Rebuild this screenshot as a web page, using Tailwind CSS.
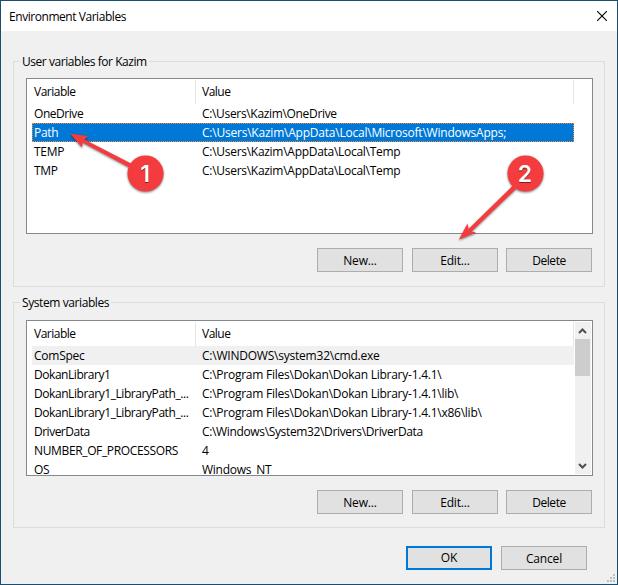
<!DOCTYPE html>
<html lang="en">
<head>
<meta charset="utf-8">
<title>Environment Variables</title>
<script src="https://cdn.jsdelivr.net/npm/@tailwindcss/browser@4"></script>
</head>
<body class="font-['Open_Sans','Noto_Sans',sans-serif] text-[12px] leading-[19px] text-black">
<div class="relative flex h-[585px] w-[618px] flex-col overflow-hidden whitespace-nowrap border border-[#1a4d6e] bg-[#f0f0f0]">
  <header class="flex h-[30px] shrink-0 items-center justify-between bg-white pl-2 pr-[10px]">
    <h1 class="tracking-[-0.45px]">Environment Variables</h1>
    <svg class="h-[10px] w-[10px]" viewBox="0 0 10 10" fill="none" stroke="#000" stroke-width="1.1"><path d="M0 0 10 10M10 0 0 10"/></svg>
  </header>

  <section class="relative ml-3 mt-[30px] h-[226px] w-[592px] shrink-0 border border-[#dcdcdc] px-3 pt-4">
    <h2 class="absolute -top-[10px] left-[6px] bg-[#f0f0f0] px-[2px] tracking-[-0.45px]">User variables for Kazim</h2>
    <div class="h-[156px] w-[567px] border border-[#828790] bg-white p-px pl-[5px] tracking-[-0.28px]">
      <div class="flex h-6 tracking-[-0.5px]">
        <div class="w-[164px] border-r border-[#e5e5e5] pl-[2px] pt-[2px]">Variable</div>
        <div class="w-[378px] border-r border-[#e5e5e5] pl-[6px] pt-[2px]">Value</div>
      </div>
      <div class="flex h-[19px]"><div class="w-[164px] pl-[2px] tracking-[-0.45px]">OneDrive</div><div class="pl-[6px] tracking-[-0.33px]">C:\Users\Kazim\OneDrive</div></div>
      <div class="flex h-[19px] w-[542px] bg-[#0078d7] text-white outline-1 -outline-offset-1 outline-dotted outline-[#ff8728]"><div class="w-[164px] pl-[2px]">Path</div><div class="pl-[6px] tracking-[-0.22px]">C:\Users\Kazim\AppData\Local\Microsoft\WindowsApps;</div></div>
      <div class="flex h-[19px]"><div class="w-[164px] pl-[2px]">TEMP</div><div class="pl-[6px]">C:\Users\Kazim\AppData\Local\Temp</div></div>
      <div class="flex h-[19px]"><div class="w-[164px] pl-[2px]">TMP</div><div class="pl-[6px]">C:\Users\Kazim\AppData\Local\Temp</div></div>
    </div>
    <div class="mt-[14px] flex pl-[291px] tracking-[-0.16px]">
      <button class="h-6 w-[86px] border border-[#adadad] bg-[#e1e1e1]">New...</button>
      <button class="ml-[9px] h-6 w-[86px] border border-[#adadad] bg-[#e1e1e1]">Edit...</button>
      <button class="ml-2 h-6 w-[86px] border border-[#adadad] bg-[#e1e1e1] tracking-[-0.45px]">Delete</button>
    </div>
  </section>

  <section class="relative ml-3 mt-[15px] h-[226px] w-[592px] shrink-0 border border-[#dcdcdc] px-3 pt-[17px]">
    <h2 class="absolute -top-[10px] left-[6px] bg-[#f0f0f0] px-[2px] tracking-[-0.41px]">System variables</h2>
    <div class="flex h-[156px] w-[567px] overflow-hidden border border-[#828790] bg-white p-px pl-[5px] tracking-[-0.25px]">
      <div class="h-[153px] w-[543px] overflow-hidden">
        <div class="flex h-6 tracking-[-0.5px]">
          <div class="w-[164px] border-r border-[#e5e5e5] pl-[2px] pt-[2px]">Variable</div>
          <div class="w-[378px] border-r border-[#e5e5e5] pl-[6px] pt-[2px]">Value</div>
        </div>
        <div class="flex h-[19px] w-[542px] bg-[#f0f0f0]"><div class="w-[164px] pl-[2px]">ComSpec</div><div class="pl-[6px] tracking-[-0.22px]">C:\WINDOWS\system32\cmd.exe</div></div>
        <div class="flex h-[19px]"><div class="w-[164px] pl-[2px] tracking-[-0.45px]">DokanLibrary1</div><div class="pl-[6px]">C:\Program Files\Dokan\Dokan Library-1.4.1\</div></div>
        <div class="flex h-[19px]"><div class="w-[164px] pl-[2px] tracking-[-0.43px]">DokanLibrary1_LibraryPath_...</div><div class="pl-[6px]">C:\Program Files\Dokan\Dokan Library-1.4.1\lib\</div></div>
        <div class="flex h-[19px]"><div class="w-[164px] pl-[2px] tracking-[-0.43px]">DokanLibrary1_LibraryPath_...</div><div class="pl-[6px]">C:\Program Files\Dokan\Dokan Library-1.4.1\x86\lib\</div></div>
        <div class="flex h-[19px]"><div class="w-[164px] pl-[2px] tracking-[-0.5px]">DriverData</div><div class="pl-[6px] tracking-[-0.35px]">C:\Windows\System32\Drivers\DriverData</div></div>
        <div class="flex h-[19px]"><div class="w-[164px] pl-[2px] tracking-[-0.36px]">NUMBER_OF_PROCESSORS</div><div class="pl-[6px]">4</div></div>
        <div class="flex h-[19px]"><div class="w-[164px] pl-[2px]">OS</div><div class="pl-[6px]">Windows_NT</div></div>
      </div>
      <div class="flex h-[152px] w-4 flex-col bg-[#f0f0f0]">
        <svg class="h-[17px] w-[15px] shrink-0" viewBox="0 0 15 17" fill="none" stroke="#505050" stroke-width="2"><path d="M4 11 7.5 7.5 11 11"/></svg>
        <div class="h-[37px] w-[15px] bg-[#cdcdcd]"></div>
        <svg class="mt-auto h-[17px] w-[15px] shrink-0" viewBox="0 0 15 17" fill="none" stroke="#505050" stroke-width="2"><path d="M4 7 7.5 10.500 11 7"/></svg>
      </div>
    </div>
    <div class="mt-[14px] flex pl-[291px] tracking-[-0.16px]">
      <button class="h-6 w-[86px] border border-[#adadad] bg-[#e1e1e1]">New...</button>
      <button class="ml-[9px] h-6 w-[86px] border border-[#adadad] bg-[#e1e1e1]">Edit...</button>
      <button class="ml-2 h-6 w-[86px] border border-[#adadad] bg-[#e1e1e1] tracking-[-0.45px]">Delete</button>
    </div>
  </section>

  <footer class="mt-[18px] flex pl-[405px] tracking-[-0.16px]">
    <button class="h-6 w-[86px] border-2 border-[#0078d7] bg-[#e1e1e1] leading-[18px]">OK</button>
    <button class="ml-[9px] h-6 w-[86px] border border-[#adadad] bg-[#e1e1e1]">Cancel</button>
  </footer>

  <svg class="absolute bottom-[2px] right-[2px] h-2 w-2" viewBox="0 0 8 8" fill="#bfbfbf"><path d="M6 0h2v2h-2zM3 3h2v2h-2zM6 3h2v2h-2zM0 6h2v2h-2zM3 6h2v2h-2zM6 6h2v2h-2z"/></svg>

  <svg class="absolute -left-px -top-px h-[585px] w-[618px]" viewBox="0 0 618 585">
    <g class="drop-shadow-[0_1px_1px_rgba(0,0,0,0.5)]" fill="#f43b3d">
      <path d="M70 133.500 88 136 84.500 139.500 135 165.500 133 169.500 82.500 142.500 82 147.500Z"/>
      <circle cx="145.500" cy="173.500" r="18"/>
      <path d="M459 239.500 467.500 223.500 468.500 229 515 183.500 518 187 471.500 231.500 476 232.500Z"/>
      <circle cx="525.500" cy="173.500" r="18"/>
    </g>
    <g class="font-['Inter',sans-serif] text-[23px] font-semibold drop-shadow-[0_1px_0.5px_rgba(0,0,0,0.5)]" fill="#fff" text-anchor="middle">
      <text x="145" y="182">1</text>
      <text x="525" y="182">2</text>
    </g>
  </svg>
</div>
</body>
</html>
